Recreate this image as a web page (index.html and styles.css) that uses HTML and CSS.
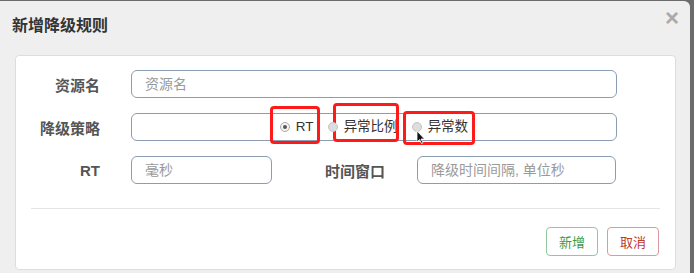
FILE: index.html
```html
<!DOCTYPE html>
<html lang="zh">
<head>
    <meta charset="UTF-8">
    <title>新增降级规则</title>
    <link rel="stylesheet" href="styles.css">
</head>
<body>
    <div class="dialog">
        <header class="dialog-head">
            <h3>新增降级规则</h3>
            <span class="close">&times;</span>
        </header>
        <section class="panel">
            <div class="row">
                <label class="label">资源名</label>
                <input class="field wide" type="text" placeholder="资源名">
            </div>
            <div class="row">
                <label class="label">降级策略</label>
                <div class="field wide radios">
                    <span class="opt mark-rt"><i class="dot on"></i>RT</span>
                    <span class="opt mark-ratio"><i class="dot"></i>异常比例</span>
                    <span class="opt mark-count"><i class="dot"></i>异常数
                        <svg class="pointer" width="9" height="13" viewBox="0 0 9 13"><path d="M1 0 L1 11 L3.5 8.5 L5.5 12.5 L7 11.8 L5 8 L8.5 8 Z" fill="#111" stroke="#fff" stroke-width="0.8"/></svg>
                    </span>
                </div>
            </div>
            <div class="row">
                <label class="label">RT</label>
                <input class="field short" type="text" placeholder="毫秒">
                <label class="label2">时间窗口</label>
                <input class="field mid" type="text" placeholder="降级时间间隔, 单位秒">
            </div>
            <hr>
            <div class="actions">
                <button class="btn add">新增</button>
                <button class="btn cancel">取消</button>
            </div>
        </section>
    </div>
</body>
</html>
```

FILE: styles.css
```css
body {
    margin: 0;
    background: #6b6b6b;
    font-family: "Liberation Sans", "Noto Sans CJK SC", sans-serif;
    height: 273px;
    overflow: hidden;
}
.dialog {
    width: 690px;
    height: 276px;
    margin-top: 1px;
    background: #efefef;
    border-radius: 0 6px 0 0;
}
.dialog-head {
    height: 54px;
    position: relative;
}
.dialog-head h3 {
    margin: 0;
    padding: 15px 0 0 12px;
    font-size: 16px;
    font-weight: bold;
    color: #333;
    line-height: 19px;
}
.close {
    position: absolute;
    right: 11px;
    top: 3px;
    font-size: 24px;
    color: #aaa;
    font-weight: bold;
}
.panel {
    margin: 0 14px 0 15px;
    background: #fff;
    border: 1px solid #ddd;
    border-radius: 4px;
    padding: 14px 0 13px 0;
}
.row {
    display: flex;
    align-items: center;
    margin-bottom: 15px;
}
.label {
    width: 84px;
    text-align: right;
    font-size: 15px;
    font-weight: bold;
    color: #555;
    margin-right: 31px;
}
.label2 {
    width: 62px;
    font-size: 15px;
    font-weight: bold;
    color: #555;
    margin: 0 30px 0 53px;
}
.field {
    box-sizing: border-box;
    height: 28px;
    border: 1px solid #8b9db3;
    border-radius: 6px;
    padding: 0 13px;
    font-size: 14px;
    font-family: inherit;
    color: #555;
    outline: none;
}
.field::placeholder {
    color: #9a9a9a;
}
.wide { width: 486px; }
.short { width: 141px; }
.mid { width: 199px; }
.radios {
    display: flex;
    justify-content: center;
    align-items: center;
    gap: 14px;
    padding: 0;
}
.opt {
    position: relative;
    display: flex;
    align-items: center;
    font-size: 13.5px;
    line-height: 20px;
    color: #333;
}
.dot {
    box-sizing: border-box;
    width: 10px;
    height: 10px;
    border-radius: 50%;
    background: #ddd;
    border: 1px solid #c4c4c4;
    margin-right: 6px;
    position: relative;
}
.dot.on {
    background: #f4f4f4;
    border-color: #aaa;
}
.dot.on::after {
    content: "";
    position: absolute;
    left: 2px;
    top: 2px;
    width: 4px;
    height: 4px;
    border-radius: 50%;
    background: #555;
}
.opt::before {
    content: "";
    position: absolute;
    border: 3px solid #ff1a1a;
    border-radius: 4px;
}
.mark-rt::before { left: -10px; right: -6px; top: -11px; bottom: -7px; }
.mark-ratio::before { left: 5px; right: -1px; top: -14px; bottom: -5px; }
.mark-count::before { left: -9px; right: -7px; top: -6px; bottom: -8px; }
.pointer {
    position: absolute;
    left: 4px;
    top: 14px;
}
hr {
    border: 0;
    border-top: 1px solid #e5e5e5;
    margin: 24px 15px 18px 15px;
}
.actions {
    display: flex;
    justify-content: flex-end;
    gap: 9px;
    padding-right: 16px;
}
.btn {
    width: 52px;
    height: 29px;
    background: #fff;
    border-radius: 4px;
    font-size: 13px;
    font-family: inherit;
    padding: 0;
}
.add {
    border: 1px solid #8fc89a;
    color: #3a9a4a;
}
.cancel {
    border: 1px solid #d99aa0;
    color: #c0392b;
}
```
